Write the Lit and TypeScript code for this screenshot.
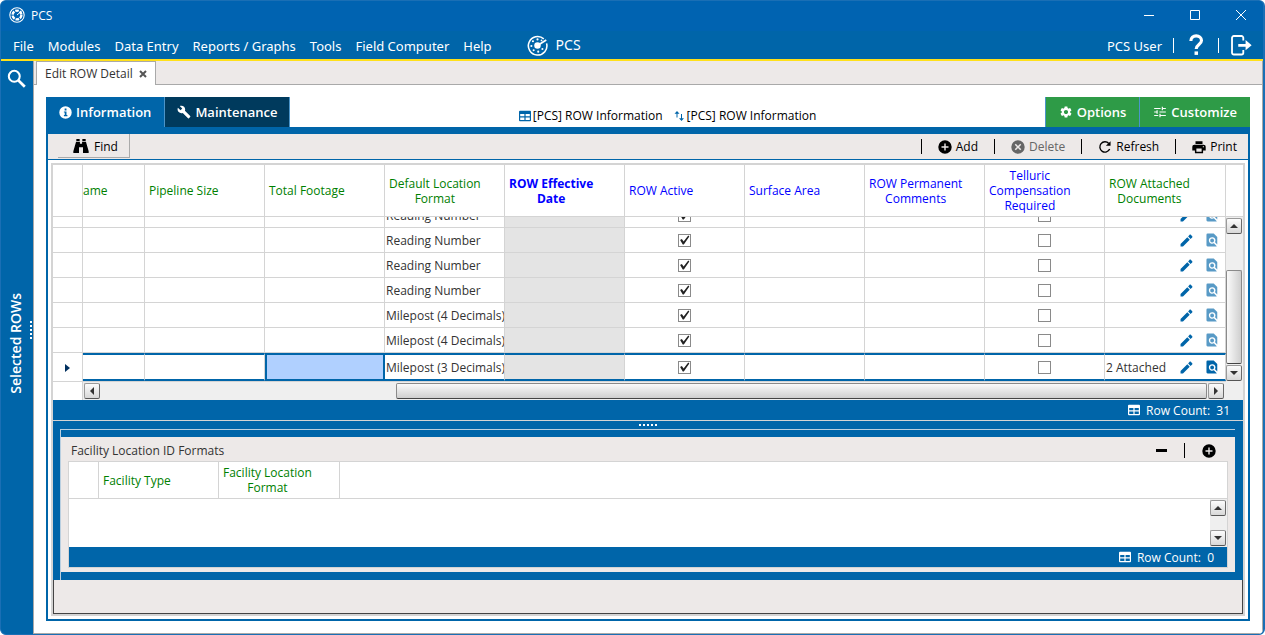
import { LitElement, html, css, svg, nothing } from "lit";
import { customElement, property } from "lit/decorators.js";
import { classMap } from "lit/directives/class-map.js";

type Column = { label: string[]; kind: "system" | "user"; required?: boolean };
type Row = { format: string; active: boolean; attached?: string; current?: boolean };

const COLUMNS: Column[] = [
  { label: ["ame"], kind: "system" },
  { label: ["Pipeline Size"], kind: "system" },
  { label: ["Total Footage"], kind: "system" },
  { label: ["Default Location", "Format"], kind: "system" },
  { label: ["ROW Effective", "Date"], kind: "user", required: true },
  { label: ["ROW Active"], kind: "user" },
  { label: ["Surface Area"], kind: "user" },
  { label: ["ROW Permanent", "Comments"], kind: "user" },
  { label: ["Telluric", "Compensation", "Required"], kind: "user" },
  { label: ["ROW Attached", "Documents"], kind: "system" },
];

const ROWS: Row[] = [
  { format: "Reading Number", active: true },
  { format: "Reading Number", active: true },
  { format: "Reading Number", active: true },
  { format: "Reading Number", active: true },
  { format: "Milepost (4 Decimals)", active: true },
  { format: "Milepost (4 Decimals)", active: true },
  { format: "Milepost (3 Decimals)", active: true, attached: "2 Attached", current: true },
];

const MENU = ["File", "Modules", "Data Entry", "Reports / Graphs", "Tools", "Field Computer", "Help"];

/* Each glyph is drawn on a 24-unit square in the current text colour. */
const GLYPHS: Record<string, unknown> = {
  badge: svg`<circle cx="12" cy="12" r="10.8" fill="none" stroke="currentColor" stroke-width="1.6"/><circle cx="12" cy="12" r="6.6" fill="none" stroke="currentColor" stroke-width="3.6" stroke-dasharray="5.4 1.5"/><path d="M12 12l7-6" stroke="currentColor" stroke-width="1.5"/>`,
  logo: svg`<path d="M19.2 4.400A10.6 10.6 0 1 0 22.400 9.600" fill="none" stroke="currentColor" stroke-width="1.800"/><path d="M12 12L22 5.800" stroke="currentColor" stroke-width="2"/><circle cx="12" cy="12" r="3.700"/><circle cx="12" cy="5" r="1.200"/><circle cx="6.800" cy="7.200" r="1.200"/><circle cx="5" cy="12.600" r="1.200"/><circle cx="7.600" cy="17.400" r="1.200"/><circle cx="12.800" cy="19" r="1.200"/><circle cx="17.600" cy="16" r="1.200"/><circle cx="16.600" cy="6.200" r="1"/>`,
  help: svg`<path d="M6.400 7.600C6.400 4 9 2 12.200 2S18 4 18 7.200C18 11.600 12.200 11.400 12.200 16.400" fill="none" stroke="currentColor" stroke-width="3.400"/><rect x="10.400" y="19" width="3.800" height="3.800"/>`,
  exit: svg`<path d="M14.5 7V4.2A2 2 0 0 0 12.5 2.2H4.2A2 2 0 0 0 2.2 4.2V20.4A2 2 0 0 0 4.2 22.4H12.500A2 2 0 0 0 14.500 20.400V17.500" fill="none" stroke="currentColor" stroke-width="2"/><path d="M9 10.800H17V6.600L23.600 12.200L17 17.800V13.800H9Z"/>`,
  search: svg`<circle cx="9.2" cy="9.200" r="6.900" fill="none" stroke="currentColor" stroke-width="2.600"/><path d="M14.200 14.200L22.500 22.500" stroke="currentColor" stroke-width="3.400"/>`,
  info: svg`<path fill-rule="evenodd" d="M12 0.500a11.500 11.500 0 1 0 0 23a11.500 11.500 0 0 0 0-23zM10.400 4.800h3.400v3.400h-3.400zM9 10h4.800v6.800H15.500V19H9v-2.200h1.600v-4.600H9z"/>`,
  wrench: svg`<path d="M22.700 19l-9.100-9.100c.9-2.300.4-5-1.500-6.900-2-2-5-2.400-7.400-1.300L9 6 6 9 1.600 4.700C.4 7.100.9 10.100 2.900 12.100c1.900 1.900 4.600 2.400 6.900 1.500l9.100 9.100c.4.400 1 .4 1.400 0l2.300-2.300c.5-.4.5-1.100.1-1.400z"/>`,
  gear: svg`<path d="M19.140 12.940c.04-.3.060-.61.060-.94 0-.32-.02-.64-.07-.94l2.030-1.580c.18-.14.230-.41.120-.61l-1.920-3.320c-.12-.22-.37-.29-.59-.22l-2.390.96c-.5-.38-1.030-.7-1.620-.94l-.36-2.540c-.04-.24-.24-.41-.48-.41h-3.840c-.24 0-.43.170-.47.410l-.36 2.540c-.59.240-1.130.570-1.620.940l-2.390-.96c-.22-.08-.47 0-.59.220L2.740 8.870c-.12.210-.08.470.12.610l2.030 1.580c-.05.300-.09.630-.09.940s.02.640.07.940l-2.030 1.580c-.18.140-.23.410-.12.610l1.920 3.320c.12.220.37.290.59.220l2.390-.96c.5.380 1.030.7 1.620.940l.36 2.540c.05.240.24.410.48.410h3.840c.24 0 .44-.17.470-.41l.36-2.540c.59-.24 1.130-.56 1.620-.94l2.390.96c.22.080.47 0 .59-.22l1.920-3.320c.12-.22.070-.47-.12-.61l-2.010-1.580zM12 15.600c-1.980 0-3.600-1.620-3.600-3.600s1.620-3.600 3.600-3.600 3.600 1.620 3.600 3.600-1.620 3.600-3.600 3.600z"/>`,
  tune: svg`<path d="M2 17v2h7v-2H2zM2 5v2h11V5H2zm11 16v-2h9v-2h-9v-2h-2v6h2zM6 9v2H2v2h4v2h2V9H6zm16 4v-2H11v2h11zm-7-4h2V7h5V5h-5V3h-2v6z"/>`,
  table: svg`<path fill-rule="evenodd" d="M2 1.500H22A2 2 0 0 1 24 3.500V20.500A2 2 0 0 1 22 22.500H2A2 2 0 0 1 0 20.500V3.500A2 2 0 0 1 2 1.500zM2.400 8V12.600H10.800V8zM13.200 8V12.600H21.600V8zM2.400 15V19.800H10.800V15zM13.200 15V19.800H21.600V15z"/>`,
  sort: svg`<path d="M8 2L3 7.500H7V15H9V7.500H13zM17 22L12 16.500H16V8H18V16.500H22z"/>`,
  binoculars: svg`<path d="M5 1.500h5v3H5zM14 1.500h5v3h-5zM4.600 5.500h5.800v3h3.200v-3h5.800L23.500 20v2.500h-8.500V14H9v8.500H.5V20z"/>`,
  plus: svg`<path fill-rule="evenodd" d="M12 .5a11.500 11.500 0 1 0 0 23a11.500 11.500 0 0 0 0-23zM10.800 6h2.400v4.800H18v2.400h-4.800V18h-2.400v-4.800H6v-2.400h4.800z"/>`,
  cross: svg`<path fill-rule="evenodd" d="M12 .5a11.500 11.500 0 1 0 0 23a11.500 11.500 0 0 0 0-23zM8.200 6.400L12 10.200l3.800-3.800 1.800 1.800L13.800 12l3.800 3.800-1.800 1.800L12 13.800l-3.800 3.800-1.800-1.800L10.200 12 6.400 8.200z"/>`,
  refresh: svg`<path d="M20 15.500A8.800 8.800 0 1 1 18.500 6" fill="none" stroke="currentColor" stroke-width="2.400"/><path d="M21.500 2V10H13.500z"/>`,
  print: svg`<path fill-rule="evenodd" d="M6 2h12v5H6zM4 8h16a3.500 3.500 0 0 1 3.500 3.500V18H19v4.500H5V18H.5v-6.500A3.500 3.500 0 0 1 4 8zM7.500 14.500v5.500h9v-5.500zM18.500 10.500v2h2v-2z"/>`,
  pencil: svg`<path d="M1 18.500V23h4.500L18 10.500 13.500 6zM15 4.500L19.500 9 22.500 6.300c.7-.7.700-1.600 0-2.300L20 1.500c-.7-.7-1.600-.7-2.300 0z"/>`,
  preview: svg`<path fill-rule="evenodd" d="M4.500 1H15l6 6v12.500l-3.800-3.800a5.700 5.700 0 1 0-2 2l5 5-.7.300h-15A2 2 0 0 1 2.500 21V3A2 2 0 0 1 4.500 1zM12.200 9.600a3.300 3.300 0 1 1 0 6.600a3.300 3.300 0 0 1 0-6.600z"/>`,
};

@customElement("pcs-icon")
export class PcsIcon extends LitElement {
  @property() name = "";
  @property({ type: Number }) size = 14;

  static styles = css`
    :host { display: flex; flex: none; }
    svg { display: block; fill: currentColor; }
  `;

  render() {
    return html`<svg width=${this.size} height=${this.size} viewBox="0 0 24 24" aria-hidden="true">${GLYPHS[this.name]}</svg>`;
  }
}

@customElement("pcs-scrollbar")
export class PcsScrollbar extends LitElement {
  @property({ reflect: true }) axis: "x" | "y" = "y";
  /* Shares of the track before and inside the thumb, in percent; a zero thumb hides it. */
  @property({ type: Number }) start = 0;
  @property({ type: Number }) thumb = 0;

  static styles = css`
    :host { display: flex; box-sizing: border-box; background: #efefef; padding: 1px; }
    :host([axis="y"]) { flex-direction: column; width: 17px; padding: 1px 1px 1px 0; }
    :host([axis="x"]) { height: 18px; }
    button {
      flex: none; width: 16px; height: 16px; padding: 0; display: grid; place-items: center;
      border: 1px solid #9a9a9a; border-right-color: #6a6a6a; border-bottom-color: #555;
      border-radius: 2px; background: linear-gradient(#fcfcfc, #d8d8d8);
    }
    svg { display: block; fill: #333; }
    .track { flex: 1; display: flex; min-width: 0; min-height: 0; }
    :host([axis="y"]) .track { flex-direction: column; }
    .thumb {
      box-sizing: border-box; border: 1px solid #8a8a8a; border-bottom-color: #444;
      border-radius: 2px; background: linear-gradient(#fafafa, #cfcfcf);
    }
    :host([axis="y"]) .thumb { background: linear-gradient(90deg, #fafafa, #cfcfcf); }
  `;

  render() {
    const y = this.axis === "y";
    const arrow = (d: string) => html`<svg width="8" height="8" viewBox="0 0 8 8"><path d=${d} /></svg>`;
    return html`
      <button aria-label=${y ? "Scroll up" : "Scroll left"}>${arrow(y ? "M0 6L4 2L8 6z" : "M6 0L2 4L6 8z")}</button>
      <div class="track">
        <div style="flex: ${this.start} 0 0"></div>
        ${this.thumb ? html`<div class="thumb" style="flex: ${this.thumb} 0 0"></div>` : nothing}
        <div style="flex: ${100 - this.start - this.thumb} 0 0"></div>
      </div>
      <button aria-label=${y ? "Scroll down" : "Scroll right"}>${arrow(y ? "M0 2L4 6L8 2z" : "M2 0L6 4L2 8z")}</button>
    `;
  }
}

@customElement("app-root")
export class AppRoot extends LitElement {
  static styles = css`
    :host {
      --blue: #0065a9; --grey: #ede9e8; --line: #d4d4d4; --green: #2e9b47;
      display: flex; flex-direction: column; box-sizing: border-box; height: 100vh; overflow: hidden;
      border: 1px solid #1a6fb5; border-right-width: 2px; border-radius: 6px; background: var(--blue);
      font: 12px/15px "Open Sans", "Noto Sans", sans-serif; color: #333;
    }
    button { font: inherit; color: inherit; border: 0; padding: 0; background: none; }
    a { color: inherit; text-decoration: none; }

    .titlebar { flex: none; height: 30px; box-sizing: border-box; display: flex; align-items: center; gap: 6px; padding: 0 16px 2px 8px; background: #0063b1; color: #fff; }
    .titlebar .name { flex: 1; }
    .titlebar .controls { display: flex; gap: 34px; }
    .titlebar button { display: block; }
    .titlebar svg { display: block; fill: none; stroke: #fff; }

    .menubar { flex: none; height: 28px; display: flex; align-items: center; padding: 0 11px 0 12px; color: #fff; font-size: 13px; line-height: 18px; font-family: "Noto Sans", "Open Sans", sans-serif; border-bottom: 2px solid #ffe01a; }
    .menu { display: flex; gap: 14px; padding-top: 2px; }
    .brand { display: flex; align-items: center; gap: 8px; margin-left: 35px; font-size: 14px; }
    .session { margin-left: auto; display: flex; align-items: center; gap: 11px; }
    .session span { padding-top: 2px; }
    .rule { width: 1px; height: 15px; background: currentColor; }
    .session button { display: flex; }

    .workspace { flex: 1; min-height: 0; display: flex; }
    .sidebar { flex: none; width: 32px; box-sizing: border-box; display: flex; flex-direction: column; padding-top: 8px; color: #fff; }
    .sidebar button { margin-left: 6px; align-self: flex-start; }
    .sidebar .rail { flex: 1; display: flex; align-items: center; justify-content: flex-end; gap: 5px; padding: 0 1px 36px 0; }
    .sidebar .rail span { writing-mode: vertical-rl; transform: rotate(180deg); font-weight: 600; font-size: 14px; line-height: 18px; }
    .sidebar .rail i { margin-bottom: 26px; }
    .dots { width: 2px; height: 18px; background: repeating-linear-gradient(#fff 0 2px, transparent 2px 4px); }
    .dots.wide { width: 18px; height: 2px; background: repeating-linear-gradient(90deg, #fff 0 2px, transparent 2px 4px); }

    .page { flex: 1; min-width: 0; display: flex; flex-direction: column; background: #fff; border: solid #a9a9a9; border-width: 0 1px 1px; }
    .doctabs { flex: none; display: flex; height: 24px; box-sizing: border-box; padding-left: 2px; background: linear-gradient(var(--grey) 23px, #a9a9a9 23px); }
    .doctab { display: flex; align-items: center; gap: 6px; box-sizing: border-box; padding: 0 8px; background: #fff; border: 1px solid #a9a9a9; border-bottom: 0; }
    .doctab button { display: block; }
    .content { flex: 1; min-height: 0; display: flex; flex-direction: column; padding: 12px; }

    .viewbar { flex: none; display: flex; height: 30px; }
    .view { display: flex; align-items: center; box-sizing: border-box; gap: 4px; padding: 0 13px; border: solid #4b94c9; border-width: 0 1px 0 0; color: #fff; font-weight: 600; font-size: 13px; background: var(--blue); }
    .view.dark { background: #003a5d; padding: 0 12px; }
    .view.go { background: var(--green); border-width: 0 0 0 1px; }
    .sources { flex: 1; display: flex; justify-content: center; align-items: flex-end; gap: 10px; padding-bottom: 3px; color: #000; line-height: 16px; }
    .sources span { display: flex; align-items: center; gap: 2px; }
    .sources pcs-icon { color: var(--blue); }

    .panel { flex: 1; min-height: 0; display: flex; flex-direction: column; border: 2px solid var(--blue); border-top-width: 7px; }
    .toolbar { flex: none; height: 25px; display: flex; align-items: center; padding: 0 11px 0 10px; background: var(--grey); border-bottom: 1px solid var(--blue); color: #000; }
    .toolbar button { display: flex; align-items: center; gap: 4px; }
    .toolbar .find { box-sizing: border-box; height: 24px; gap: 5px; padding: 1px 11px 0 15px; border: solid #aaa; border-width: 0 1px 1px 0; align-self: flex-start; }
    .toolbar .actions { margin-left: auto; display: flex; align-items: center; gap: 16px; }
    .toolbar .off { color: #666; }

    .frame { flex: 1; min-height: 0; display: flex; flex-direction: column; margin: 3px; border: 2px solid var(--line); }
    .grid { flex: 1; min-height: 0; display: grid; grid-template: auto 1fr auto / minmax(0, 1fr) 17px; }
    table { width: 100%; table-layout: fixed; border-collapse: separate; border-spacing: 0; }
    th, td { box-sizing: border-box; border: solid var(--line); border-width: 0 1px 1px 0; padding: 0 1px; text-align: left; font-weight: 400; overflow: hidden; white-space: nowrap; }
    th { height: 52px; padding: 0 4px; background: #fff; }
    th > div { display: inline-block; text-align: center; }
    .system { color: #008000; }
    .user { color: #0000ff; }
    .required { font-weight: 700; }
    th.clipped { padding-left: 0; }
    td { height: 25px; }
    .sel { width: 30px; }
    .c0 { width: 62px; }
    .c { width: 120px; }
    .corner { border-bottom: 1px solid var(--line); }
    .rows { overflow: hidden; display: flex; flex-direction: column; justify-content: flex-end; background: #fff; border-bottom: 1px solid var(--line); }
    td.mid { text-align: center; }
    td.locked { background: #e4e4e4; }
    .current td { height: 28px; border-top: 2px solid var(--blue); border-bottom: 2px solid var(--blue); }
    .current td.sel { border-color: var(--line); border-top: 0; text-align: center; border-bottom: 0; }
    .current td.picked { background: #b0d0ff; border: 2px solid var(--blue); }
    input { appearance: none; display: block; box-sizing: border-box; width: 13px; height: 13px; margin: 0 auto; border: 1px solid #8a8a8a; background: #fff; }
    input:checked::before { content: ""; display: block; height: 11px; background: #222; clip-path: polygon(10% 50%, 26% 40%, 42% 64%, 84% 8%, 94% 18%, 44% 92%, 34% 92%); }
    .docs { display: flex; align-items: center; color: #333; }
    .docs .count { flex: 1; }
    .docs button { display: block; color: var(--blue); }
    .docs button + button { margin: 0 5px 0 12px; }
    .docs .idle { opacity: 0.65; }
    .hscroll { display: flex; background: #efefef; grid-column: 1 / 3; }
    .hscroll .pad { flex: none; box-sizing: border-box; width: 30px; background: #fff; border-right: 1px solid var(--line); }
    .hscroll pcs-scrollbar { flex: 1; }
    .hscroll .end { flex: none; width: 18px; }
    .rowcount { flex: none; height: 20px; display: flex; align-items: center; justify-content: flex-end; gap: 6px; padding-right: 13px; background: var(--blue); color: #fff; white-space: pre; }

    .split { flex: none; height: 8px; display: grid; place-items: center; background: var(--blue); border-top: 1px solid var(--line); }
    .detail { flex: none; background: var(--blue); padding: 0 8px 0 7px; }
    .detail .inner { border: solid #b9cfe0; border-width: 1px 0 0 1px; padding: 7px 0 8px; }
    .detail .body { background: var(--grey); padding: 0 7px 4px; }
    .head { display: flex; align-items: center; height: 24px; padding: 3px 12px 0 3px; box-sizing: border-box; }
    .head .tools { margin-left: auto; display: flex; align-items: center; gap: 17px; color: #000; }
    .head button { display: block; }
    .minus { width: 11px; height: 3px; background: #000; }
    .sub { border: 1px solid var(--line); background: #fff; }
    .sub th { height: 37px; }
    .sub th:last-child { border-right: 0; }
    .sub .c2 { width: 121px; }
    .sub .area { display: flex; justify-content: flex-end; height: 48px; }
    .rest { flex: none; height: 34px; box-sizing: border-box; background: var(--grey); border: solid #444; border-width: 0 1px 1px; }
  `;

  private header(column: Column, index: number) {
    const classes = classMap({
      c0: index === 0,
      clipped: index === 0,
      c: index > 0 && index < COLUMNS.length - 1,
      [column.kind]: true,
      required: !!column.required,
    });
    return html`<th class=${classes} scope="col"><div>${column.label.map((line, i) => (i ? html`<br />${line}` : line))}</div></th>`;
  }

  private row(row: Row) {
    return html`<tr class=${classMap({ current: !!row.current })}>
      <td class="sel">${row.current ? html`<svg width="5" height="8" viewBox="0 0 5 8"><path d="M0 0L5 4L0 8z" fill="#00305f" /></svg>` : nothing}</td>
      <td class="c0"></td>
      <td class="c"></td>
      <td class=${classMap({ c: true, picked: !!row.current })}></td>
      <td class="c">${row.format}</td>
      <td class="c locked"></td>
      <td class="c mid"><input type="checkbox" aria-label="ROW Active" .checked=${row.active} /></td>
      <td class="c"></td>
      <td class="c"></td>
      <td class="c mid"><input type="checkbox" aria-label="Telluric Compensation Required" /></td>
      <td>
        <div class="docs">
          <span class="count">${row.attached ?? nothing}</span>
          <button aria-label="Edit documents"><pcs-icon name="pencil" size="13"></pcs-icon></button>
          <button class=${classMap({ idle: !row.attached })} aria-label="View documents"><pcs-icon name="preview" size="14"></pcs-icon></button>
        </div>
      </td>
    </tr>`;
  }

  render() {
    return html`
      <header class="titlebar">
        <pcs-icon name="badge" size="16"></pcs-icon>
        <span class="name">PCS</span>
        <div class="controls">
          <button aria-label="Minimize"><svg width="12" height="12"><path d="M1 6.5H11" /></svg></button>
          <button aria-label="Maximize"><svg width="12" height="12"><path d="M1.500 1.500H10.500V10.500H1.500z" /></svg></button>
          <button aria-label="Close"><svg width="12" height="12"><path d="M1 1L11 11M11 1L1 11" /></svg></button>
        </div>
      </header>
      <nav class="menubar">
        <div class="menu">${MENU.map((item) => html`<a href="#">${item}</a>`)}</div>
        <div class="brand"><pcs-icon name="logo" size="21"></pcs-icon>PCS</div>
        <div class="session">
          <span>PCS User</span><i class="rule"></i>
          <button aria-label="Help"><pcs-icon name="help" size="22"></pcs-icon></button>
          <i class="rule"></i>
          <button aria-label="Sign out"><pcs-icon name="exit" size="22"></pcs-icon></button>
        </div>
      </nav>
      <div class="workspace">
        <aside class="sidebar">
          <button aria-label="Search"><pcs-icon name="search" size="19"></pcs-icon></button>
          <div class="rail"><span>Selected ROWs</span><i class="dots"></i></div>
        </aside>
        <main class="page">
          <div class="doctabs">
            <div class="doctab">Edit ROW Detail
              <button aria-label="Close tab"><svg width="8" height="8"><path d="M1 1L7 7M7 1L1 7" stroke="#555" stroke-width="2" /></svg></button>
            </div>
          </div>
          <div class="content">
            <div class="viewbar">
              <button class="view"><pcs-icon name="info" size="13"></pcs-icon>Information</button>
              <button class="view dark"><pcs-icon name="wrench" size="14"></pcs-icon>Maintenance</button>
              <div class="sources">
                <span><pcs-icon name="table" size="12"></pcs-icon>[PCS] ROW Information</span>
                <span><pcs-icon name="sort" size="12"></pcs-icon>[PCS] ROW Information</span>
              </div>
              <button class="view go"><pcs-icon name="gear" size="14"></pcs-icon>Options</button>
              <button class="view go"><pcs-icon name="tune" size="14"></pcs-icon>Customize</button>
            </div>
            <section class="panel">
              <div class="toolbar">
                <button class="find"><pcs-icon name="binoculars" size="16"></pcs-icon>Find</button>
                <div class="actions">
                  <i class="rule"></i><button><pcs-icon name="plus" size="14"></pcs-icon>Add</button>
                  <i class="rule"></i><button class="off"><pcs-icon name="cross" size="14"></pcs-icon>Delete</button>
                  <i class="rule"></i><button><pcs-icon name="refresh" size="14"></pcs-icon>Refresh</button>
                  <i class="rule"></i><button><pcs-icon name="print" size="14"></pcs-icon>Print</button>
                </div>
              </div>
              <div class="frame">
                <div class="grid">
                  <table>
                    <thead><tr><th class="sel"></th>${COLUMNS.map((c, i) => this.header(c, i))}</tr></thead>
                  </table>
                  <div class="corner"></div>
                  <div class="rows"><table><tbody>${ROWS.map((r) => this.row(r))}</tbody></table></div>
                  <pcs-scrollbar axis="y" start="28" thumb="71"></pcs-scrollbar>
                  <div class="hscroll">
                    <div class="pad"></div>
                    <pcs-scrollbar axis="x" start="26.8" thumb="73.1"></pcs-scrollbar>
                    <div class="end"></div>
                  </div>
                </div>
                <div class="rowcount"><pcs-icon name="table" size="12"></pcs-icon><span>Row Count:  31</span></div>
                <div class="split"><i class="dots wide"></i></div>
                <section class="detail">
                  <div class="inner">
                    <div class="body">
                      <div class="head">Facility Location ID Formats
                        <div class="tools">
                          <button aria-label="Remove" class="minus"></button><i class="rule"></i>
                          <button aria-label="Add"><pcs-icon name="plus" size="14"></pcs-icon></button>
                        </div>
                      </div>
                      <div class="sub">
                        <table>
                          <thead><tr>
                            <th class="sel"></th>
                            <th class="c system" scope="col"><div>Facility Type</div></th>
                            <th class="c2 system" scope="col"><div>Facility Location<br />Format</div></th>
                            <th></th>
                          </tr></thead>
                        </table>
                        <div class="area"><pcs-scrollbar axis="y"></pcs-scrollbar></div>
                        <div class="rowcount"><pcs-icon name="table" size="12"></pcs-icon><span>Row Count:  0</span></div>
                      </div>
                    </div>
                  </div>
                </section>
                <div class="rest"></div>
              </div>
            </section>
          </div>
        </main>
      </div>
    `;
  }
}
